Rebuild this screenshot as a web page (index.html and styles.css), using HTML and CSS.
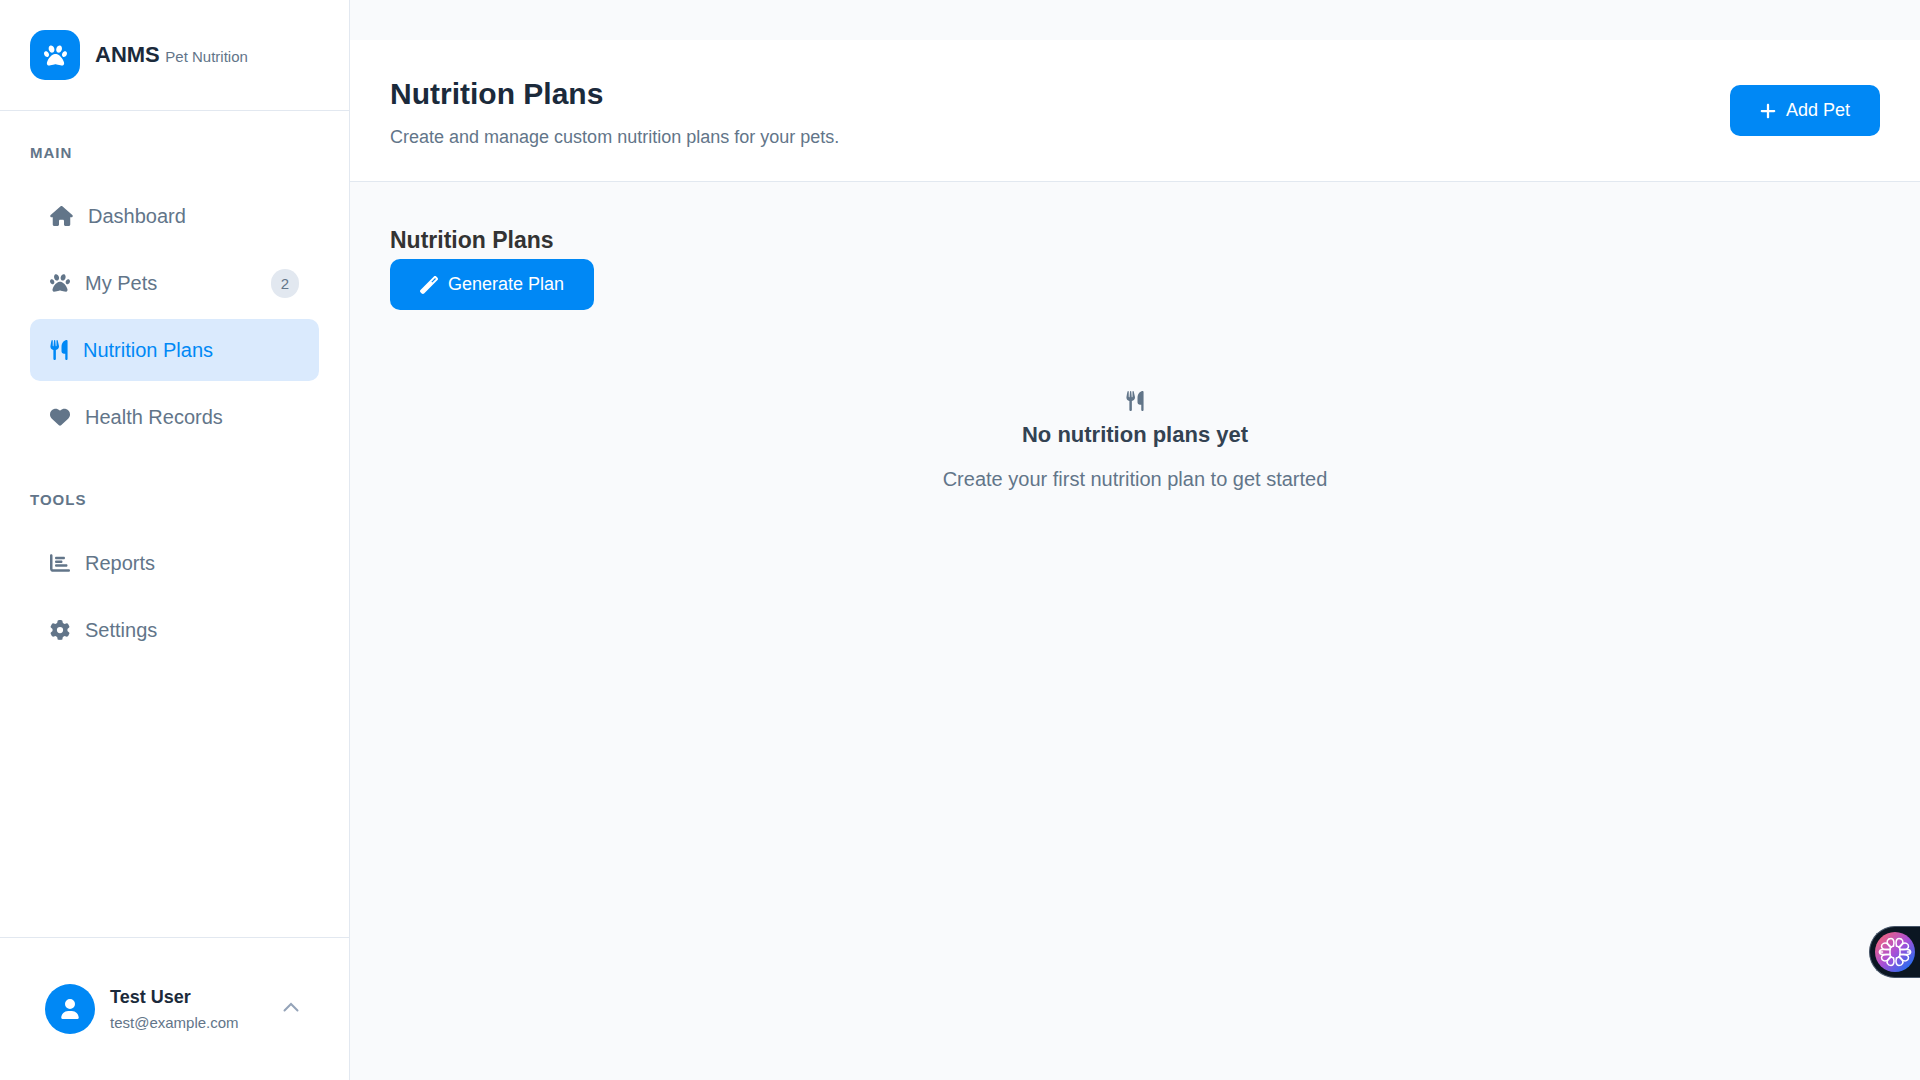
FILE: index.html
```html
<!DOCTYPE html>
<html lang="en">
<head>
<meta charset="utf-8">
<meta name="viewport" content="width=device-width, initial-scale=1">
<title>Nutrition Plans - ANMS</title>
<link rel="stylesheet" href="styles.css">
</head>
<body>
<svg class="sprite" aria-hidden="true">
  <symbol id="paw" viewBox="0 0 512 512"><path d="M226.5 92.9c14.3 42.9-.3 86.2-32.6 96.8s-70.1-15.6-84.4-58.5s.3-86.2 32.6-96.8s70.1 15.6 84.4 58.5zM100.4 198.6c18.9 32.4 14.3 70.1-10.2 84.1s-59.7-.9-78.5-33.3S-2.7 179.3 21.8 165.3s59.7 .9 78.5 33.3zM69.2 401.2C121.6 259.9 214.7 224 256 224s134.4 35.9 186.8 177.2c3.6 9.7 5.2 20.1 5.2 30.5v1.6c0 25.8-20.9 46.7-46.7 46.7c-11.5 0-22.9-1.4-34-4.2l-88-22c-15.3-3.8-31.3-3.8-46.6 0l-88 22c-11.1 2.8-22.5 4.2-34 4.2C84.9 480 64 459.1 64 433.3v-1.6c0-10.4 1.6-20.8 5.2-30.5zM421.8 282.7c-24.5-14-29.1-51.7-10.2-84.1s54-47.3 78.5-33.3s29.1 51.7 10.2 84.1s-54 47.3-78.5 33.3zM310.1 189.7c-32.3-10.6-46.9-53.9-32.6-96.8s52.1-69.1 84.4-58.5s46.9 53.9 32.6 96.8s-52.1 69.1-84.4 58.5z"/></symbol>
  <symbol id="utensils" viewBox="0 0 448 512"><path d="M416 0C400 0 288 32 288 176V288c0 35.3 28.7 64 64 64h32V480c0 17.7 14.3 32 32 32s32-14.3 32-32V32c0-17.7-14.3-32-32-32zM64 16C64 7.8 57.9 1 49.7 .1S34.2 4.6 32.4 12.5L2.1 148.8C.7 155.1 0 161.5 0 167.9c0 45.9 35.1 83.6 80 87.7V480c0 17.7 14.3 32 32 32s32-14.3 32-32V255.6c44.9-4.1 80-41.8 80-87.7c0-6.4-.7-12.8-2.1-19.1L191.6 12.5c-1.8-8-9.3-13.3-17.4-12.4S160 7.8 160 16V150.2c0 5.4-4.4 9.8-9.8 9.8c-5.1 0-9.3-3.9-9.8-9L127.9 14.6C127.2 6.3 120.3 0 112 0s-15.2 6.3-15.9 14.6L83.7 151c-.5 5.1-4.7 9-9.8 9c-5.4 0-9.8-4.4-9.8-9.8V16z"/></symbol>
</svg>
<div class="app">
  <aside class="sidebar">
    <div class="brand">
      <span class="brand-logo"><svg class="icon icon-brand" viewBox="0 0 512 512"><use href="#paw"/></svg></span>
      <div class="brand-text"><strong>ANMS</strong> <small>Pet Nutrition</small></div>
    </div>
    <nav class="menu">
      <section class="menu-group">
        <h2 class="menu-title">MAIN</h2>
        <ul class="menu-list">
          <li><a class="menu-link" href="#dashboard">
            <svg class="icon icon-wide" viewBox="0 0 576 512"><path d="M575.8 255.5c0 18-15 32.1-32 32.1h-32l.7 160.2c0 2.7-.2 5.4-.5 8.1V472c0 22.1-17.9 40-40 40H392c-22.1 0-40-17.9-40-40V384c0-17.7-14.3-32-32-32H256c-17.7 0-32 14.3-32 32v88c0 22.1-17.9 40-40 40H104c-22.1 0-40-17.9-40-40V287.6H32c-18 0-32-14-32-32.1c0-9 3-17 10-24L266.4 8c7-7 15-8 22-8s15 2 21 7L564.8 231.5c8 7 12 15 11 24z"/></svg>
            <span>Dashboard</span></a></li>
          <li><a class="menu-link" href="#pets">
            <svg class="icon" viewBox="0 0 512 512"><use href="#paw"/></svg>
            <span>My Pets</span><span class="badge">2</span></a></li>
          <li><a class="menu-link active" href="#plans" aria-current="page">
            <svg class="icon icon-narrow" viewBox="0 0 448 512"><use href="#utensils"/></svg>
            <span>Nutrition Plans</span></a></li>
          <li><a class="menu-link" href="#health">
            <svg class="icon" viewBox="0 0 512 512"><path d="M47.6 300.4L228.3 469.1c7.5 7 17.4 10.9 27.7 10.9s20.2-3.9 27.7-10.9L464.4 300.4c30.4-28.3 47.6-68 47.6-109.5v-5.8c0-69.9-50.5-129.5-119.4-141C347 36.5 300.6 51.4 268 84L256 96 244 84c-32.6-32.6-79-47.5-124.6-39.9C50.5 55.6 0 115.2 0 185.1v5.8c0 41.5 17.2 81.2 47.6 109.5z"/></svg>
            <span>Health Records</span></a></li>
        </ul>
      </section>
      <section class="menu-group">
        <h2 class="menu-title">TOOLS</h2>
        <ul class="menu-list">
          <li><a class="menu-link" href="#reports">
            <svg class="icon" viewBox="0 0 512 512"><path d="M32 32c17.7 0 32 14.3 32 32V400c0 8.8 7.2 16 16 16H480c17.7 0 32 14.3 32 32s-14.3 32-32 32H80c-44.2 0-80-35.8-80-80V64C0 46.3 14.3 32 32 32zm96 96c0-17.7 14.3-32 32-32l192 0c17.7 0 32 14.3 32 32s-14.3 32-32 32l-192 0c-17.7 0-32-14.3-32-32zm32 64H288c17.7 0 32 14.3 32 32s-14.3 32-32 32H160c-17.7 0-32-14.3-32-32s14.3-32 32-32zm0 96H416c17.7 0 32 14.3 32 32s-14.3 32-32 32H160c-17.7 0-32-14.3-32-32s14.3-32 32-32z"/></svg>
            <span>Reports</span></a></li>
          <li><a class="menu-link" href="#settings">
            <svg class="icon" viewBox="0 0 512 512"><path d="M495.9 166.6c3.2 8.7 .5 18.4-6.4 24.6l-43.3 39.4c1.1 8.3 1.7 16.8 1.7 25.4s-.6 17.1-1.7 25.4l43.3 39.4c6.9 6.2 9.6 15.9 6.4 24.6c-4.4 11.9-9.7 23.3-15.8 34.3l-4.7 8.1c-6.6 11-14 21.4-22.1 31.2c-5.9 7.2-15.7 9.6-24.5 6.8l-55.7-17.7c-13.4 10.3-28.2 18.9-44 25.4l-12.5 57.1c-2 9.1-9 16.3-18.2 17.8c-13.8 2.3-28 3.5-42.5 3.5s-28.7-1.2-42.5-3.5c-9.2-1.5-16.2-8.7-18.2-17.8l-12.5-57.1c-15.8-6.5-30.6-15.1-44-25.4L83.1 425.9c-8.8 2.8-18.6 .3-24.5-6.8c-8.1-9.8-15.5-20.2-22.1-31.2l-4.7-8.1c-6.1-11-11.4-22.4-15.8-34.3c-3.2-8.7-.5-18.4 6.4-24.6l43.3-39.4C64.6 273.1 64 264.6 64 256s.6-17.1 1.7-25.4L22.4 191.2c-6.9-6.2-9.6-15.9-6.4-24.6c4.4-11.9 9.7-23.3 15.8-34.3l4.7-8.1c6.6-11 14-21.4 22.1-31.2c5.9-7.2 15.7-9.6 24.5-6.8l55.7 17.7c13.4-10.3 28.2-18.9 44-25.4l12.5-57.1c2-9.1 9-16.3 18.2-17.8C227.3 1.2 241.5 0 256 0s28.7 1.2 42.5 3.5c9.2 1.5 16.2 8.7 18.2 17.8l12.5 57.1c15.8 6.5 30.6 15.1 44 25.4l55.7-17.7c8.8-2.8 18.6-.3 24.5 6.8c8.1 9.8 15.5 20.2 22.1 31.2l4.7 8.1c6.1 11 11.4 22.4 15.8 34.3zM256 336a80 80 0 1 0 0-160 80 80 0 1 0 0 160z"/></svg>
            <span>Settings</span></a></li>
        </ul>
      </section>
    </nav>
    <div class="account">
      <button class="account-button" type="button" aria-label="Account menu">
        <span class="avatar"><svg class="icon icon-narrow" viewBox="0 0 448 512"><path d="M224 256A128 128 0 1 0 224 0a128 128 0 1 0 0 256zm-45.7 48C79.8 304 0 383.8 0 482.3C0 498.7 13.3 512 29.7 512H418.3c16.4 0 29.7-13.3 29.7-29.7C448 383.8 368.2 304 269.7 304H178.3z"/></svg></span>
        <span class="account-text"><span class="account-name">Test User</span><span class="account-mail">test@example.com</span></span>
        <svg class="chevron" viewBox="0 0 16 16"><path d="M1.500 9.500 8 3l6.500 6.500"/></svg>
      </button>
    </div>
  </aside>
  <main class="main">
    <header class="page-header">
      <div>
        <h1 class="page-title">Nutrition Plans</h1>
        <p class="page-lead">Create and manage custom nutrition plans for your pets.</p>
      </div>
      <button class="button" type="button">
        <svg class="icon button-icon-small" viewBox="0 0 448 512"><path d="M256 80c0-17.700-14.300-32-32-32s-32 14.300-32 32V224H48c-17.700 0-32 14.300-32 32s14.300 32 32 32H192V432c0 17.700 14.300 32 32 32s32-14.300 32-32V288H400c17.700 0 32-14.300 32-32s-14.300-32-32-32H256V80z"/></svg>
        Add Pet
      </button>
    </header>
    <section class="content">
      <h2 class="section-title">Nutrition Plans</h2>
      <button class="button" type="button">
        <svg class="icon button-icon" viewBox="0 0 512 512"><path fill-rule="evenodd" d="M14.100 463.300c-18.700-18.700-18.700-49.100 0-67.900L395.400 14.100c18.700-18.700 49.100-18.700 67.900 0l34.600 34.600c18.700 18.700 18.700 49.100 0 67.900L116.500 497.900c-18.700 18.700-49.100 18.700-67.900 0L14.100 463.300zM347.600 187.600l105-105L429.400 59.300l-105 105 23.200 23.300z"/></svg>
        Generate Plan
      </button>
      <div class="empty">
        <svg class="icon icon-narrow" viewBox="0 0 448 512"><use href="#utensils"/></svg>
        <h3 class="empty-title">No nutrition plans yet</h3>
        <p class="empty-text">Create your first nutrition plan to get started</p>
      </div>
    </section>
  </main>
</div>
<button class="assistant" type="button" aria-label="Assistant">
  <svg class="assistant-icon" viewBox="0 0 40 40">
    <defs>
      <linearGradient id="glow" x1="0" y1="0" x2="1" y2="1"><stop offset=".1" stop-color="#f0647e"/><stop offset=".5" stop-color="#a94fd6"/><stop offset=".9" stop-color="#1d6ff2"/></linearGradient>
      <g id="petals">
        <path d="M18.500 14C19.500 10.500 19 6.500 16 6.500c-3.500 0-5 3.500-3 5.500l3 3"/>
        <path d="M15.500 15.500 12.500 12c-2.500-2-6-.5-6 2.200 0 2.300 2.500 3.300 5 3.300H15"/>
        <path d="M15 17.500H8c-2 0-3.500 1-3.500 2.500"/>
      </g>
      <g id="half"><use href="#petals"/><use href="#petals" transform="matrix(1 0 0 -1 0 40)"/><path d="M4.500 20h3M18.500 14c-2 .5-3.500 2-3.500 4v4c0 2 1.500 3.500 3.500 4"/></g>
    </defs>
    <circle cx="20" cy="20" r="20" fill="url(#glow)"/>
    <g fill="none" stroke="#fff" stroke-width="1.500" stroke-linejoin="round" stroke-linecap="round">
      <use href="#half"/>
      <use href="#half" transform="matrix(-1 0 0 1 40 0)"/>
    </g>
  </svg>
</button>
</body>
</html>
```
FILE: styles.css
```css
* {
  box-sizing: border-box;
  margin: 0;
  padding: 0;
}

body {
  background: #f9fafc;
  color: #333;
  font-family: "Liberation Sans", Arial, sans-serif;
  font-size: 20px;
  line-height: 32px;
}

button {
  border: 0;
  background: none;
  color: inherit;
  font: inherit;
  cursor: pointer;
}

.sprite {
  display: none;
}

.icon {
  flex: none;
  width: 20px;
  height: 20px;
  fill: currentColor;
}

.icon-brand {
  width: 23px;
  height: 23px;
}

.icon-wide {
  width: 23px;
}

.icon-narrow {
  width: 18px;
}

.app {
  display: flex;
  min-height: 100vh;
}

/* Sidebar */

.sidebar {
  display: flex;
  flex: none;
  flex-direction: column;
  width: 350px;
  border-right: 1px solid #e2e8f0;
  background: #fff;
}

.brand {
  display: flex;
  align-items: center;
  gap: 15px;
  padding: 30px;
  border-bottom: 1px solid #e2e8f0;
}

.brand-logo,
.avatar {
  display: flex;
  flex: none;
  align-items: center;
  justify-content: center;
  width: 50px;
  height: 50px;
  background: #0088f5;
  color: #fff;
}

.brand-logo {
  border-radius: 15px;
}

.brand-text {
  padding-top: 2px;
}

.brand-text strong {
  color: #1b2a3b;
  font-size: 22px;
}

.brand-text small {
  color: #627589;
  font-size: 15px;
}

.menu {
  flex: 1;
  padding: 30px;
}

.menu-group {
  margin-bottom: 40px;
}

.menu-title {
  margin-bottom: 20px;
  color: #627589;
  font-size: 15px;
  line-height: 24px;
  letter-spacing: 1px;
}

.menu-list {
  display: flex;
  flex-direction: column;
  gap: 5px;
  list-style: none;
}

.menu-link {
  display: flex;
  align-items: center;
  gap: 15px;
  padding: 15px 20px;
  border-radius: 10px;
  color: #627589;
  text-decoration: none;
}

.menu-link.active {
  background: #daeafd;
  color: #0088f5;
}

.badge {
  margin-left: auto;
  padding: 2px 10px;
  border-radius: 15px;
  background: #e2e8f0;
  font-size: 15px;
  line-height: 25px;
}

.account {
  padding: 30px;
  border-top: 1px solid #e2e8f0;
}

.account-button {
  display: flex;
  align-items: center;
  gap: 15px;
  width: 100%;
  padding: 15px 20px 15px 15px;
  text-align: left;
}

.avatar {
  border-radius: 50%;
}

.account-text {
  display: flex;
  flex: 1;
  flex-direction: column;
}

.account-name {
  color: #1b2a3b;
  font-size: 18px;
  font-weight: bold;
  line-height: 28px;
}

.account-mail {
  color: #627589;
  font-size: 15px;
  line-height: 24px;
}

.chevron {
  width: 16px;
  height: 16px;
  fill: none;
  stroke: #94a3b8;
  stroke-width: 2;
  stroke-linecap: round;
}

/* Page */

.main {
  flex: 1;
  padding-top: 40px;
}

.page-header {
  display: flex;
  align-items: center;
  justify-content: space-between;
  padding: 30px 40px;
  border-bottom: 1px solid #e2e8f0;
  background: #fff;
}

.page-title {
  margin-bottom: 5px;
  color: #1b2a3b;
  font-size: 30px;
  line-height: 48px;
}

.page-lead {
  color: #627589;
  font-size: 18px;
  line-height: 28px;
}

.button {
  display: inline-flex;
  align-items: center;
  gap: 10px;
  padding: 15px 30px;
  border-radius: 10px;
  background: #0088f5;
  color: #fff;
  font-size: 18px;
  line-height: 21px;
}

.button-icon {
  width: 18px;
  height: 18px;
}

.button-icon-small {
  width: 16px;
  height: 18px;
}

.content {
  padding: 40px;
}

.section-title {
  font-size: 23px;
  line-height: 37px;
}

.empty {
  display: flex;
  flex-direction: column;
  align-items: center;
  padding: 81px 40px;
  color: #627589;
}

.empty-title {
  margin: 5px 0 10px;
  color: #334252;
  font-size: 22px;
  line-height: 37px;
}

/* Assistant tab docked to the window's right edge */

.assistant {
  position: fixed;
  right: 0;
  bottom: 102px;
  display: flex;
  padding: 5px;
  border: 1px solid #475569;
  border-right: 0;
  border-radius: 26px 0 0 26px;
  background: #0b1622;
}

.assistant-icon {
  width: 40px;
  height: 40px;
}
```
